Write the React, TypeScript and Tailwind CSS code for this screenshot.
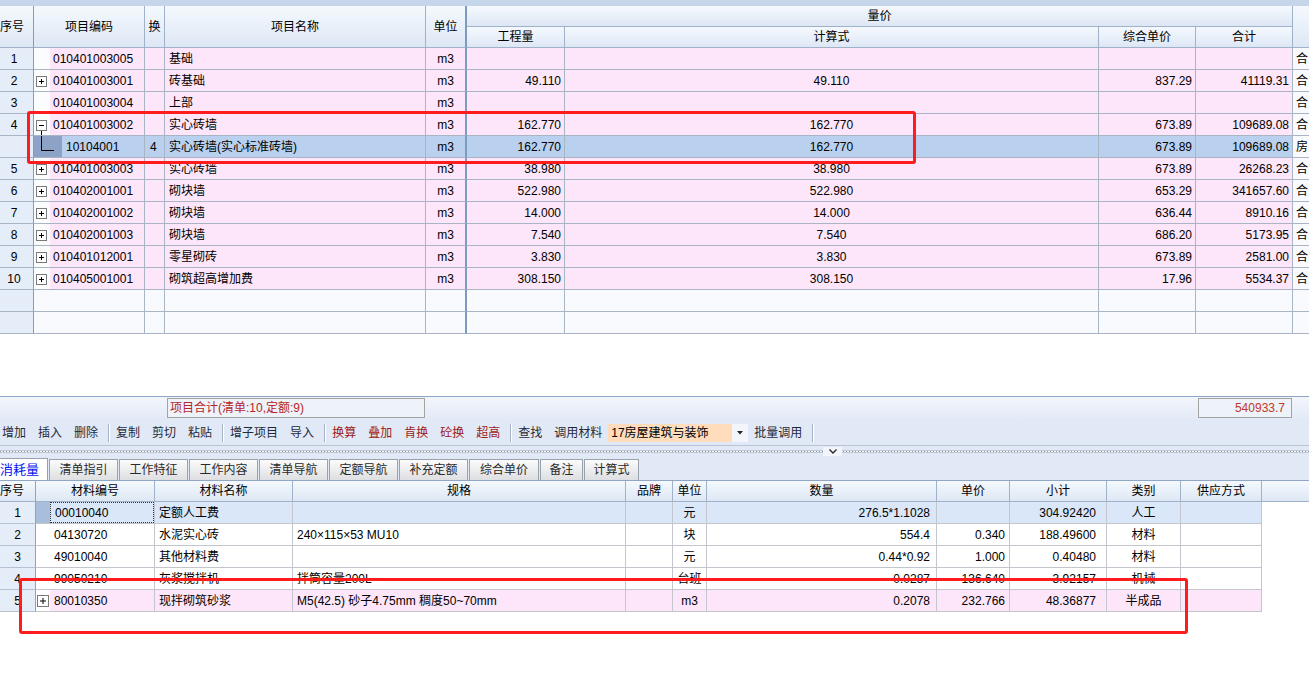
import React from "react";

type TopRowT = {
  n: string;
  code: string;
  box?: "+" | "-" | "";
  huan?: string;
  name: string;
  unit: string;
  q: string;
  f: string;
  p: string;
  t: string;
  last: string;
  sel?: boolean;
  empty?: boolean;
};

const topRows: TopRowT[] = [
  { n: "1", code: "010401003005", box: "", name: "基础", unit: "m3", q: "", f: "", p: "", t: "", last: "合" },
  { n: "2", code: "010401003001", box: "+", name: "砖基础", unit: "m3", q: "49.110", f: "49.110", p: "837.29", t: "41119.31", last: "合" },
  { n: "3", code: "010401003004", box: "", name: "上部", unit: "m3", q: "", f: "", p: "", t: "", last: "合" },
  { n: "4", code: "010401003002", box: "-", name: "实心砖墙", unit: "m3", q: "162.770", f: "162.770", p: "673.89", t: "109689.08", last: "合" },
  { n: "", code: "10104001", huan: "4", name: "实心砖墙(实心标准砖墙)", unit: "m3", q: "162.770", f: "162.770", p: "673.89", t: "109689.08", last: "房", sel: true },
  { n: "5", code: "010401003003", box: "+", name: "实心砖墙", unit: "m3", q: "38.980", f: "38.980", p: "673.89", t: "26268.23", last: "合" },
  { n: "6", code: "010402001001", box: "+", name: "砌块墙", unit: "m3", q: "522.980", f: "522.980", p: "653.29", t: "341657.60", last: "合" },
  { n: "7", code: "010402001002", box: "+", name: "砌块墙", unit: "m3", q: "14.000", f: "14.000", p: "636.44", t: "8910.16", last: "合" },
  { n: "8", code: "010402001003", box: "+", name: "砌块墙", unit: "m3", q: "7.540", f: "7.540", p: "686.20", t: "5173.95", last: "合" },
  { n: "9", code: "010401012001", box: "+", name: "零星砌砖", unit: "m3", q: "3.830", f: "3.830", p: "673.89", t: "2581.00", last: "合" },
  { n: "10", code: "010405001001", box: "+", name: "砌筑超高增加费", unit: "m3", q: "308.150", f: "308.150", p: "17.96", t: "5534.37", last: "合" },
  { n: "", code: "", name: "", unit: "", q: "", f: "", p: "", t: "", last: "", empty: true },
  { n: "", code: "", name: "", unit: "", q: "", f: "", p: "", t: "", last: "", empty: true },
];

type BotRowT = {
  n: string;
  code: string;
  name: string;
  spec: string;
  unit: string;
  qty: string;
  price: string;
  sub: string;
  kind: string;
  sel?: boolean;
  pink?: boolean;
};

const botRows: BotRowT[] = [
  { n: "1", code: "00010040", name: "定额人工费", spec: "", unit: "元", qty: "276.5*1.1028", price: "", sub: "304.92420", kind: "人工", sel: true },
  { n: "2", code: "04130720", name: "水泥实心砖", spec: "240×115×53 MU10", unit: "块", qty: "554.4", price: "0.340", sub: "188.49600", kind: "材料" },
  { n: "3", code: "49010040", name: "其他材料费", spec: "", unit: "元", qty: "0.44*0.92", price: "1.000", sub: "0.40480", kind: "材料" },
  { n: "4", code: "99050210", name: "灰浆搅拌机", spec: "拌筒容量200L", unit: "台班", qty: "0.0287", price: "136.640", sub: "3.92157", kind: "机械" },
  { n: "5", code: "80010350", name: "现拌砌筑砂浆", spec: "M5(42.5) 砂子4.75mm 稠度50~70mm", unit: "m3", qty: "0.2078", price: "232.766", sub: "48.36877", kind: "半成品", pink: true },
];

function PlusBox({ minus, line }: { minus?: boolean; line?: boolean }) {
  return (
    <svg width="16" height="22" viewBox="0 0 16 22" className="block">
      <rect x="2.5" y="6.5" width="10" height="10" fill="#ffffff" stroke="#7a7a7a" />
      <line x1="5" y1="11.5" x2="10" y2="11.5" stroke="#000" />
      {!minus && <line x1="7.5" y1="9" x2="7.5" y2="14" stroke="#000" />}
      {line && <line x1="7.5" y1="17" x2="7.5" y2="22" stroke="#000" />}
    </svg>
  );
}

function TreeLine() {
  return (
    <svg width="28" height="22" viewBox="0 0 28 22" className="block">
      <path d="M7.5 0 V14.5 H20" fill="none" stroke="#000" />
    </svg>
  );
}

const topGrid = "grid grid-cols-[34px_111px_20px_261px_41px_98px_534px_97px_97px_16px]";
const botGrid = "grid grid-cols-[36px_119px_138px_333px_47px_34px_230px_73px_97px_74px_81px_1fr]";

const hcell =
  "flex items-center justify-center border-r border-b border-[#9fb2ca] bg-linear-to-b from-[#f5f9fe] to-[#dde7f4] text-black whitespace-nowrap overflow-hidden";

function TopRow({ r }: { r: TopRowT }) {
  const bg = r.sel ? "bg-[#b9d0ef]" : r.empty ? "bg-[#f8fafd]" : "bg-[#fde6f9]";
  const b = "border-r border-b border-[#a9b4c4] h-[22px] flex items-center whitespace-nowrap overflow-hidden";
  return (
    <div className={`${topGrid} h-[22px]`}>
      <div className={`${b} justify-center pr-[5px] bg-[#e5edf8] border-r-[#7f9dc3]`}>{r.n}</div>
      <div className={`${b} ${bg}`}>
        {r.sel ? (
          <div className="w-[28px] h-full bg-[#8ca3c7] shrink-0">
            <TreeLine />
          </div>
        ) : (
          <div className={`w-[16px] h-full shrink-0 ${r.empty ? "bg-[#f8fafd]" : "bg-[#fbfcfe]"}`}>
            {r.box === "+" && <PlusBox />}
            {r.box === "-" && <PlusBox minus line />}
          </div>
        )}
        <span className={r.sel ? "pl-[4px]" : "pl-[3px]"}>{r.code}</span>
      </div>
      <div className={`${b} ${bg} pl-[5px]`}>{r.huan ?? ""}</div>
      <div className={`${b} ${bg} pl-[4px]`}>{r.name}</div>
      <div className={`${b} ${bg} justify-center border-r-2 border-r-[#7d9bc1]`}>{r.unit}</div>
      <div className={`${b} ${bg} justify-end pr-[3px]`}>{r.q}</div>
      <div className={`${b} ${bg} justify-center`}>{r.f}</div>
      <div className={`${b} ${bg} justify-end pr-[3px]`}>{r.p}</div>
      <div className={`${b} ${bg} justify-end pr-[3px]`}>{r.t}</div>
      <div className={`${b} bg-[#f8fafd] pl-[3px] border-r-0`}>{r.last}</div>
    </div>
  );
}

function BotRow({ r }: { r: BotRowT }) {
  const bg = r.sel ? "bg-[#d9e7f8]" : r.pink ? "bg-[#fde6f9]" : "bg-white";
  const b = "border-r border-b border-[#c3c7cd] h-[22px] flex items-center whitespace-nowrap overflow-hidden";
  return (
    <div className={`${botGrid} h-[22px]`}>
      <div className={`${b} justify-center bg-[#e5edf8] border-r-[#8aa4c6] border-b-[#b6c2d2]`}>{r.n}</div>
      <div className={`${b} ${bg}`}>
        <div className={`w-[14px] h-full shrink-0 ${r.sel ? "bg-[#a9bedb]" : "bg-white"}`}>
          {r.pink && (
            <svg width="14" height="22" viewBox="0 0 14 22" className="block">
              <rect x="1.5" y="5.5" width="11" height="11" fill="#ffffff" stroke="#7a7a7a" />
              <line x1="4" y1="11" x2="10" y2="11" stroke="#000" />
              <line x1="7" y1="8" x2="7" y2="14" stroke="#000" />
            </svg>
          )}
        </div>
        <div
          className={`flex-1 h-full flex items-center pl-[4px] ${
            r.sel ? "border border-dotted border-[#333]" : ""
          }`}
        >
          {r.code}
        </div>
      </div>
      <div className={`${b} ${bg} pl-[4px]`}>{r.name}</div>
      <div className={`${b} ${bg} pl-[4px]`}>{r.spec}</div>
      <div className={`${b} ${bg}`}></div>
      <div className={`${b} ${bg} justify-center`}>{r.unit}</div>
      <div className={`${b} ${bg} justify-end pr-[6px]`}>{r.qty}</div>
      <div className={`${b} ${bg} justify-end pr-[4px]`}>{r.price}</div>
      <div className={`${b} ${bg} justify-end pr-[10px]`}>{r.sub}</div>
      <div className={`${b} ${bg} justify-center`}>{r.kind}</div>
      <div className={`${b} ${bg}`}></div>
      <div className="h-[22px] bg-white"></div>
    </div>
  );
}

function TB({ t, red }: { t: string; red?: boolean }) {
  return <span className={`px-[6px] whitespace-nowrap ${red ? "text-[#9c1a1a]" : "text-[#1f2b3a]"}`}>{t}</span>;
}

function Sep() {
  return <span className="ml-[4px] mr-[0px] w-[1px] h-[18px] bg-[#a7b3c4] border-r border-white box-content"></span>;
}

const tabs = [
  { t: "清单指引", w: "w-[69px]" },
  { t: "工作特征", w: "w-[69px]" },
  { t: "工作内容", w: "w-[69px]" },
  { t: "清单导航", w: "w-[69px]" },
  { t: "定额导航", w: "w-[69px]" },
  { t: "补充定额", w: "w-[69px]" },
  { t: "综合单价", w: "w-[70px]" },
  { t: "备注", w: "w-[43px]" },
  { t: "计算式", w: "w-[55px]" },
];

export default function App() {
  return (
    <div className="relative w-[1309px] h-[680px] overflow-hidden bg-white text-[12px] leading-none text-black font-['Liberation_Sans','Noto_Sans_CJK_SC',sans-serif]">
      {/* top strip */}
      <div className="h-[6px] bg-[#c6d6ea]"></div>

      {/* top table header */}
      <div className={`${topGrid} grid-rows-[21px_21px] h-[42px]`}>
        <div className={`${hcell} row-span-2 justify-start pl-[0px] border-r-[#7f9dc3]`}>
          <span>序号</span>
        </div>
        <div className={`${hcell} row-span-2`}>项目编码</div>
        <div className={`${hcell} row-span-2`}>换</div>
        <div className={`${hcell} row-span-2`}>项目名称</div>
        <div className={`${hcell} row-span-2 border-r-2 border-r-[#7d9bc1]`}>单位</div>
        <div className={`${hcell} col-span-4`}>量价</div>
        <div className={`${hcell} row-span-2 border-r-0`}></div>
        <div className={hcell}>工程量</div>
        <div className={hcell}>计算式</div>
        <div className={hcell}>综合单价</div>
        <div className={hcell}>合计</div>
      </div>

      {/* top rows */}
      {topRows.map((r, i) => (
        <TopRow key={i} r={r} />
      ))}

      {/* white gap */}
      <div className="h-[62px] bg-white"></div>

      {/* summary bar */}
      <div className="h-[24px] border-t border-[#8ca6c8] bg-linear-to-b from-[#f2f6fc] to-[#e2e9f6] flex items-start pt-[1px]">
        <div className="ml-[167px] w-[258px] h-[20px] border border-[#a3a3a3] bg-[#eef2f9] flex items-center pl-[2px] text-[#b3262a]">
          项目合计(清单:10,定额:9)
        </div>
        <div className="ml-[773px] w-[94px] h-[20px] border border-[#a3a3a3] bg-[#eef2f9] flex items-center justify-end pr-[6px] text-[#c0392b]">
          540933.7
        </div>
      </div>

      {/* toolbar */}
      <div className="h-[25px] bg-[#e2e9f6] flex items-center -ml-[4px]">
        <TB t="增加" />
        <TB t="插入" />
        <TB t="删除" />
        <Sep />
        <TB t="复制" />
        <TB t="剪切" />
        <TB t="粘贴" />
        <Sep />
        <TB t="增子项目" />
        <TB t="导入" />
        <Sep />
        <TB t="换算" red />
        <TB t="叠加" red />
        <TB t="肯换" red />
        <TB t="砼换" red />
        <TB t="超高" red />
        <Sep />
        <TB t="查找" />
        <TB t="调用材料" />
        <div className="flex items-center h-[18px]">
          <div className="w-[124px] h-full bg-[#ffdcbc] flex items-center pl-[3px] whitespace-nowrap">17房屋建筑与装饰</div>
          <div className="w-[16px] h-full bg-[#f3f5fa] flex items-center justify-center">
            <svg width="6" height="4" viewBox="0 0 6 4">
              <path d="M0 0 H6 L3 3.5 Z" fill="#222" />
            </svg>
          </div>
        </div>
        <TB t="批量调用" />
        <Sep />
      </div>

      {/* splitter */}
      <div className="h-[12px] bg-[#e2e9f6] border-t border-[#b9c4d4] relative">
        <div className="mt-[4px] h-[3px] border-y border-[#c0c8d4] bg-[repeating-linear-gradient(90deg,#8d97a6_0_1px,#f4f6fa_1px_3px)]"></div>
        <div className="absolute left-[823px] top-[1px] w-[19px] h-[9px] bg-[#f3f5fa] flex items-center justify-center">
          <svg width="8" height="5" viewBox="0 0 8 5">
            <path d="M0.5 0.5 L4 4 L7.5 0.5" fill="none" stroke="#222" strokeWidth="1.3" />
          </svg>
        </div>
      </div>

      {/* tabs */}
      <div className="h-[23px] bg-[#e2e9f6] flex items-end gap-[1px]">
        <div className="w-[48px] h-[22px] bg-white border-r border-t border-[#9aa2ad] flex items-center pl-[0px] text-[13px] text-[#0a14f0] whitespace-nowrap overflow-hidden">
          <span>消耗量</span>
        </div>
        {tabs.map((t) => (
          <div
            key={t.t}
            className={`${t.w} h-[21px] border border-b-0 border-[#9aa2ad] bg-linear-to-b from-[#fbfbfb] to-[#dedfe2] flex items-center justify-center text-[#2a2a2a] whitespace-nowrap`}
          >
            {t.t}
          </div>
        ))}
      </div>

      {/* bottom header */}
      <div className={`${botGrid} h-[22px] border-t border-[#8fa6c4]`}>
        <div className={`${hcell} justify-start border-r-[#8aa4c6]`}>
          <span>序号</span>
        </div>
        <div className={hcell}>材料编号</div>
        <div className={hcell}>材料名称</div>
        <div className={hcell}>规格</div>
        <div className={hcell}>品牌</div>
        <div className={hcell}>单位</div>
        <div className={hcell}>数量</div>
        <div className={hcell}>单价</div>
        <div className={hcell}>小计</div>
        <div className={hcell}>类别</div>
        <div className={hcell}>供应方式</div>
        <div className={`${hcell} border-r-0`}></div>
      </div>
      {botRows.map((r, i) => (
        <BotRow key={i} r={r} />
      ))}

      {/* red annotation rectangles */}
      <div className="absolute left-[27px] top-[111px] w-[889px] h-[53px] border-[3px] border-[#ff1c1c] rounded-[3px] pointer-events-none"></div>
      <div className="absolute left-[19px] top-[578px] w-[1169px] h-[56px] border-[3px] border-[#ff1c1c] rounded-[3px] pointer-events-none"></div>
    </div>
  );
}
